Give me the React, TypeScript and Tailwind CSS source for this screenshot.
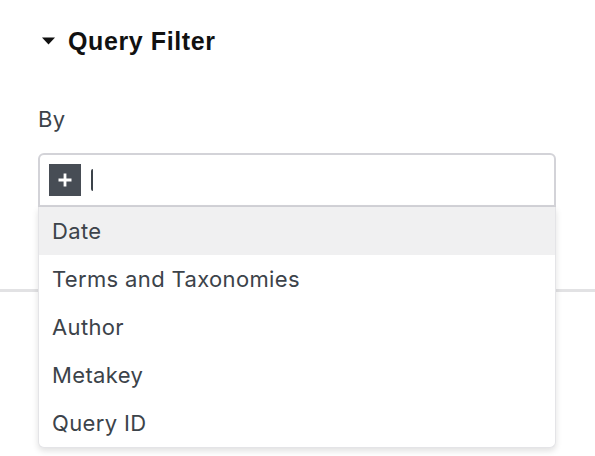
const OPTIONS = ["Date", "Terms and Taxonomies", "Author", "Metakey", "Query ID"];

export default function App() {
  return (
    <div className="w-[595px] h-[456px] bg-white overflow-hidden font-['Inter',sans-serif]">
      <div className="border-b-[3px] border-[#e2e2e4] h-[292px] pt-[27px]">
        {/* Panel heading */}
        <div className="flex items-center h-[28px] pl-[42px] gap-[13px]">
          <svg width="13" height="8" viewBox="0 0 13 8" className="shrink-0">
            <path d="M0 0.5h13L6.5 7.5z" fill="#111" />
          </svg>
          <span className="font-['Liberation_Sans',Arial,sans-serif] font-bold text-[25px] tracking-[0.6px] text-[#111] leading-[28px]">
            Query Filter
          </span>
        </div>

        <div className="px-[38px] pt-[50px]">
          <div className="text-[22px] leading-[28px] text-[#3c434a] tracking-[0.35px]">By</div>

          {/* Token field */}
          <div className="relative mt-[20px] w-[518px]">
            <div className="h-[54px] border-2 border-[#d3d3d8] rounded-t-[6px] flex items-center pl-[9px] gap-[10px]">
              <button className="w-[32px] h-[32px] bg-[#474d55] flex items-center justify-center">
                <svg width="16" height="16" viewBox="0 0 16 16">
                  <path d="M8 1.5v13M1.5 8h13" stroke="#fff" strokeWidth="2.8" />
                </svg>
              </button>
              <span className="w-[2px] h-[22px] bg-[#3c434a] rounded-l-full" />
            </div>

            {/* Suggestions */}
            <ul className="absolute top-full left-0 w-[518px] bg-white rounded-b-[6px] border-x border-b border-[#e4e4e7] shadow-[0_3px_6px_rgba(0,0,0,0.12)] z-10">
              {OPTIONS.map((opt, i) => (
                <li
                  key={opt}
                  className={`h-[48px] flex items-center pl-[13px] text-[22px] tracking-[0.35px] text-[#3c434a] ${
                    i === 0 ? "bg-[#f0f0f1]" : ""
                  }`}
                >
                  {opt}
                </li>
              ))}
            </ul>
          </div>
        </div>
      </div>
    </div>
  );
}
